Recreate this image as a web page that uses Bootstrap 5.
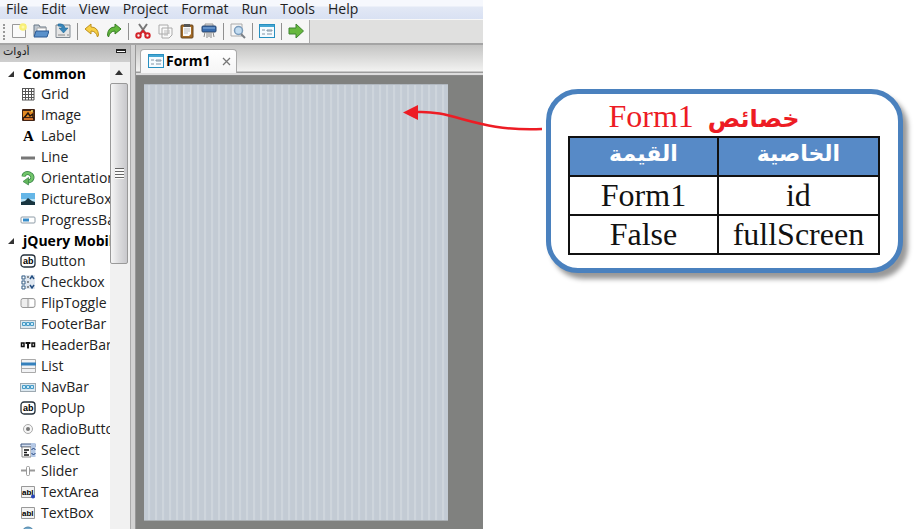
<!DOCTYPE html>
<html lang="en">
<head>
<meta charset="utf-8">
<meta name="viewport" content="width=device-width, initial-scale=1">
<title>Form designer</title>
<link rel="stylesheet" href="https://cdn.jsdelivr.net/npm/bootstrap@5.3.0/dist/css/bootstrap.min.css">
<style>
body{font-family:"Open Sans","Noto Sans",sans-serif;font-size:14px;line-height:20px;color:#222;background:#fff;overflow:hidden}
a{color:inherit;text-decoration:none}
.page{height:100vh;position:relative}
.ide{flex:0 0 52.8%;min-width:0}
.menus{height:20px;gap:13px;padding:0 6px;line-height:18px;background:linear-gradient(#f6f8fd 0 6px,#e2e8f5 7px,#d9e1f3)}
.tools-strip{height:26px;background:#e0e0df;border-top:1px solid #f7f7f7;border-bottom:2px solid #a4a4a4}
.tools-row{background:#f6f6f6;border-right:1px solid #aaa;padding:0 2px 0 8px;position:relative}
.tools-row::before{content:"";position:absolute;left:3px;top:4px;bottom:3px;border-left:2px dotted #999}
.tool{width:22px;height:22px;border:0;background:none;padding:0 3px;display:flex;align-items:center;justify-content:center}
.rule{width:1px;height:17px;background:#909090;margin:0 3px}
.palette{flex:0 0 130px;min-width:0}
.palette-head{height:18px;background:linear-gradient(#b6b6b6,#cfcfcf);padding:0 4px 0 3px;font:11px/14px "DejaVu Sans",sans-serif}
.collapse-btn{width:10px;height:4px;border:1px solid #222;border-width:2px 1px 1px;padding:0;background:#fff;margin-top:4px}
.items{background:#fff;overflow:hidden;min-width:0;padding-top:2px}
.group-title{height:20px;font-weight:700;color:#000;padding-left:7px;white-space:nowrap}
.group-title svg{width:8px;margin-right:8px;flex:none}
.entry{height:21px;padding-left:20px;white-space:nowrap}
.entry svg{width:16px;height:16px;flex:none;margin-right:5px}
.scroller{flex:0 0 20px;background:#f1f1f1}
.scroller button{border:0;background:none;padding:0;height:21px;width:18px;display:flex;align-items:center;justify-content:center}
.thumb{height:181px;width:18px;border:1px solid #999;border-radius:2px;background:linear-gradient(90deg,#f5f5f5,#dcdcde 50%,#c8c8cc)}
.thumb i{width:9px;height:11px;background:repeating-linear-gradient(#666 0 1px,#fafafa 1px 3px)}
.splitter{flex:0 0 6px;background:linear-gradient(90deg,#aaa 0 1px,#d2d2d2 1px 5px,#989898 5px)}
.tab-strip{height:31px;background:linear-gradient(#c4c4c3,#f2f2f1 26px,#9b9b9b 27px 28px,#ddd 28px 30px,#888 30px);padding:4px 4px 3px}
.doc-tab{background:linear-gradient(#fff,#f5f5f5);border:1px solid #aaa;border-bottom:0;border-radius:4px 4px 0 0;height:24px;gap:2px;padding:0 5px 0 7px;font-weight:700;color:#000}
.doc-tab svg{width:16px;height:16px}
.doc-tab button{border:0;background:none;padding:0;display:flex;margin-left:10px}
.doc-tab button svg{width:9px;height:9px}
.stage{background:#80817f;padding:8px 35px 8px 8px}
.form-sheet{background:repeating-linear-gradient(90deg,#c3cbd4 0 4px,#ced5dc 4px 6px,#c4ccd6 6px 7px);border-top:1px solid #b1b8c0;border-bottom:1px solid #a9aeb2}
.side{min-width:0;padding:81px 12px 0 1px}
.edge{width:2px;height:202px;background:linear-gradient(90deg,#777 50%,#c4c4c4 50%)}
.props{margin:8px 0 0 62px;flex:1 1 auto;align-self:flex-start;border:5px solid #4a81be;border-radius:32px;box-shadow:5px 6px 5px #999;padding:4px 18px 13px 17px;background:#fff;font:32px/37px "Liberation Serif",serif;color:#111}
.props caption{caption-side:top;text-align:center;color:#ed1c24;padding:0 40px 0 0;height:38px}
.props .ar{font-family:"DejaVu Sans",sans-serif;font-weight:700;font-size:22px}
.props caption .ar{font-size:24px;line-height:24px;margin-left:6px}
.props table{width:100%;margin:0;border-collapse:collapse;table-layout:fixed;text-align:center}
.props th,.props td{border:2px solid #111;padding:0;height:39px}
.props th{background:#578ac7;color:#fff;line-height:32px;vertical-align:top}
.props th:first-child{width:48%}
.pointer{position:absolute;left:44%;top:100px;width:140px;height:36px}
</style>
<script src="https://cdn.jsdelivr.net/npm/bootstrap@5.3.0/dist/js/bootstrap.bundle.min.js"></script>
</head>
<body>
<svg class="d-none" aria-hidden="true">
<symbol id="form" viewBox="0 0 16 16"><rect x=".5" y="1.5" width="15" height="13" fill="#f5fbff" stroke="#278fc0"/><path d="M1 3h14" stroke="#45a6d2" stroke-width="2"/><path d="M3 7h3M3 11h3M8 7h5v1H8zM8 11h5" stroke="#8295a5" fill="none"/></symbol>
<symbol id="bar" viewBox="0 0 16 16"><rect x=".5" y="4.5" width="15" height="8" fill="#dce8f0" stroke="#9da9b1"/><path d="M2.500 6.500h3v3h-3zM6.500 6.500h3v3h-3zM10.500 6.500h3v3h-3z" fill="#c9e9f8" stroke="#479bc7"/></symbol>
<symbol id="ab" viewBox="0 0 16 16"><rect x="1" y="2" width="14" height="12" rx="3" fill="#fff" stroke="#24303b" stroke-width="1.300"/><text x="3" y="11" font-family="Liberation Sans" font-size="9" font-weight="700">ab</text></symbol>
<symbol id="fold" viewBox="0 0 8 8"><path d="M7 1v6H1z" fill="#333"/></symbol>
</svg>
<div class="page d-flex">
<div class="ide d-flex flex-column">
  <nav class="menus d-flex"><a href="#">File</a><a href="#">Edit</a><a href="#">View</a><a href="#">Project</a><a href="#">Format</a><a href="#">Run</a><a href="#">Tools</a><a href="#">Help</a></nav>
  <div class="tools-strip d-flex">
    <div class="tools-row d-flex align-items-center">
      <button class="tool" aria-label="New"><svg viewBox="0 0 16 16" width="16" height="16"><path d="M2 1.500h12.500v13h-13V1.500z" fill="#fafafa" stroke="#999"/><circle cx="12" cy="4" r="3.800" fill="#f8ef76"/><circle cx="12" cy="4" r="1.500" fill="#fff9a8"/></svg></button>
      <button class="tool" aria-label="Open"><svg viewBox="0 0 16 16" width="16" height="16"><path d="M1 13V2h5l1 2h6v4" fill="#bec7d0" stroke="#697887"/><path d="M4 5h9v5H4z" fill="#fff" stroke="#aaa"/><path d="M3 8h13l-2 6H1z" fill="#5a91cb" stroke="#2c5a94"/></svg></button>
      <button class="tool" aria-label="Save"><svg viewBox="0 0 16 16" width="16" height="16"><path d="M1 2h14v12.500H1z" fill="#e5e5e5" stroke="#808991"/><path d="M3 12h7M12 12h2" stroke="#888"/><path d="M3 1q6-1 7 4h3L8.500 10 4 5h3Q7 3 3 3z" fill="#3785b9" stroke="#19618e" stroke-width=".5"/></svg></button>
      <span class="rule"></span>
      <button class="tool" aria-label="Undo"><svg viewBox="0 0 16 16" width="16" height="16"><path d="M1 6 7 1v3q7 0 7.500 8l-1 2Q12 8 7 8v3z" fill="#f8d044" stroke="#bd901d"/></svg></button>
      <button class="tool" aria-label="Redo"><svg viewBox="0 0 16 16" width="16" height="16"><path d="M15 6 9 1v3Q2 4 1.500 12l1 2Q4 8 9 8v3z" fill="#62b73c" stroke="#387f25"/></svg></button>
      <span class="rule"></span>
      <button class="tool" aria-label="Cut"><svg viewBox="0 0 16 16" width="16" height="16"><path d="M4 1l7 10M12 1 5 11" stroke="#777" stroke-width="2"/><g fill="none" stroke="#d42228" stroke-width="2"><circle cx="3.500" cy="12.500" r="2.200"/><circle cx="12.500" cy="12.500" r="2.200"/><path d="m5 11 3-3 3 3"/></g></svg></button>
      <button class="tool" aria-label="Copy"><svg viewBox="0 0 16 16" width="16" height="16"><path d="M2 2h9v9H2zM5 5h10v7l-3 3H5z" fill="#fafafa" stroke="#aaa"/><path d="M7 8h6M7 10h6M7 12h4" stroke="#bbb"/></svg></button>
      <button class="tool" aria-label="Paste"><svg viewBox="0 0 16 16" width="16" height="16"><rect x="2" y="2" width="12" height="13" rx="1" fill="#a36b26" stroke="#66451d"/><path d="M4 4h8v7l-2 2H4z" fill="#fafafa"/><path d="M5 1h6v3H5z" fill="#555"/><path d="M5 6h6M5 8h6M5 10h4" stroke="#bbb"/></svg></button>
      <button class="tool" aria-label="Shred"><svg viewBox="0 0 16 16" width="16" height="16"><path d="M4 1h8v3H4z" fill="#ddd" stroke="#999"/><rect x="1" y="3" width="14" height="6" rx="1" fill="#386db0" stroke="#28466f"/><path d="M2 5h12" stroke="#8eb6df"/><path d="M4 9l-1 5M6 9v6M8 9v5M10 9v6M12 9l1 5" stroke="#888"/></svg></button>
      <span class="rule"></span>
      <button class="tool" aria-label="Preview"><svg viewBox="0 0 16 16" width="16" height="16"><path d="M1 1h11v12H1z" fill="#f6f6f6" stroke="#aaa"/><circle cx="8.500" cy="7.500" r="4" fill="#c2dcf1" stroke="#7b9cbc" stroke-width="1.500"/><path d="m11 11 4 4" stroke="#7b8086" stroke-width="2"/></svg></button>
      <span class="rule"></span>
      <button class="tool" aria-label="Form"><svg width="16" height="16"><use href="#form"/></svg></button>
      <span class="rule"></span>
      <button class="tool" aria-label="Run"><svg viewBox="0 0 16 16" width="16" height="16"><path d="M1 5h7V1l7.500 7L8 15v-4H1z" fill="#67b83e" stroke="#3e8430"/></svg></button>
    </div>
  </div>
  <div class="d-flex flex-grow-1 overflow-hidden">
    <aside class="palette d-flex flex-column">
      <div class="palette-head d-flex justify-content-between"><span lang="ar" dir="rtl">أدوات</span><button class="collapse-btn" aria-label="Collapse"></button></div>
      <div class="d-flex flex-grow-1 overflow-hidden">
        <div class="items flex-grow-1">
          <div class="group-title d-flex align-items-center"><svg height="8"><use href="#fold"/></svg>Common</div>
          <div class="entry d-flex align-items-center"><svg viewBox="0 0 16 16"><path d="M2.500 2v12M5.500 2v12M8.500 2v12M11.500 2v12M14 2v12M2 2.500h12M2 5.500h12M2 8.500h12M2 11.500h12M2 14h12" stroke="#555"/></svg>Grid</div>
          <div class="entry d-flex align-items-center"><svg viewBox="0 0 16 16"><rect x="2" y="2" width="13" height="12" rx="1" fill="#432313"/><path d="M3 4h8l3 2v4H3z" fill="#e48a23"/><path d="m4 11 4-5 2 3 3-2v5" fill="none" stroke="#221510" stroke-width="1.500"/><path d="M4 12h9" stroke="#d0722a" stroke-width="2"/><circle cx="12" cy="4" r="1" fill="#ffe66c"/></svg>Image</div>
          <div class="entry d-flex align-items-center"><svg viewBox="0 0 16 16"><text x="3" y="13" font-family="Liberation Serif" font-size="15" font-weight="700">A</text></svg>Label</div>
          <div class="entry d-flex align-items-center"><svg viewBox="0 0 16 16"><path d="M1 9h14" stroke="#777" stroke-width="3"/></svg>Line</div>
          <div class="entry d-flex align-items-center"><svg viewBox="0 0 16 16"><path d="M3.500 6.500C4 3 8 2 11 4.500c3 3 1 6.500-3 7" fill="none" stroke="#388348" stroke-width="4"/><path d="M3.500 6.500C4 3 8 2 11 4.500c3 3 1 6.500-3 7" fill="none" stroke="#72c56a" stroke-width="2.500"/><path d="M8.500 7.500v7.500L3 11.500z" fill="#63b65c" stroke="#388348" stroke-width=".7"/></svg>Orientation</div>
          <div class="entry d-flex align-items-center"><svg viewBox="0 0 16 16"><path d="M1 2h14v12H1z" fill="#65b6e7"/><path d="M1 8h14v4H1z" fill="#b9e2f4"/><path d="m1 11 4-1 3-3 4 3 3 1v3H1z" fill="#183540"/></svg>PictureBox</div>
          <div class="entry d-flex align-items-center"><svg viewBox="0 0 16 16"><rect x="1" y="5" width="14" height="6" rx="1" fill="#fff" stroke="#8e9ca7"/><path d="M3 6.500h6v3H3z" fill="#358cca"/></svg>ProgressBar</div>
          <div class="group-title d-flex align-items-center"><svg height="8"><use href="#fold"/></svg>jQuery Mobile</div>
          <div class="entry d-flex align-items-center"><svg><use href="#ab"/></svg>Button</div>
          <div class="entry d-flex align-items-center"><svg viewBox="0 0 16 16"><path d="M1 1h14v14H1z" fill="#e0e8f1"/><path d="M2 2h3v3H2zM2 7h3v3H2zM2 12h3v3H2z" fill="#fff" stroke="#386086"/><path d="M7 3h2M7 8h2M7 13h2" stroke="#333"/><path d="m10 5 2-3 2 3M10 11l2 3 2-3" fill="none" stroke="#244e80" stroke-width="1.500"/></svg>Checkbox</div>
          <div class="entry d-flex align-items-center"><svg viewBox="0 0 16 16"><rect x="1" y="3.500" width="14" height="9" rx="2" fill="#eee" stroke="#999"/><path d="M8 4v8" stroke="#999"/><path d="M10 5h4v6h-4z" fill="#fff"/></svg>FlipToggle</div>
          <div class="entry d-flex align-items-center"><svg><use href="#bar"/></svg>FooterBar</div>
          <div class="entry d-flex align-items-center"><svg viewBox="0 0 16 16"><path d="M1.500 6h2.500v3.500H1.500zM12 6h2.500v3.500H12z" fill="none" stroke="#111" stroke-width="1.500"/><path d="M5.500 6h5M8 5v6.500" stroke="#111" stroke-width="2"/></svg>HeaderBar</div>
          <div class="entry d-flex align-items-center"><svg viewBox="0 0 16 16"><path d="M1.500 1.500h14v13h-14z" fill="#f2f3f5" stroke="#aaa"/><path d="M1 6h15" stroke="#3581bd" stroke-width="3"/><path d="M1 10.500h14" stroke="#aaa"/></svg>List</div>
          <div class="entry d-flex align-items-center"><svg><use href="#bar"/></svg>NavBar</div>
          <div class="entry d-flex align-items-center"><svg><use href="#ab"/></svg>PopUp</div>
          <div class="entry d-flex align-items-center"><svg viewBox="0 0 16 16"><circle cx="8" cy="8" r="4.500" fill="#f6f6f6" stroke="#aaa"/><circle cx="8" cy="8" r="2" fill="#777"/></svg>RadioButton</div>
          <div class="entry d-flex align-items-center"><svg viewBox="0 0 16 16"><path d="M1 2h14v3H1z" fill="#d4e0f2" stroke="#3d5680"/><path d="M2 5h9v10H2z" fill="#fff" stroke="#888"/><path d="M4 8h5M4 10.500h3M4 13h5" stroke="#111" stroke-width="1.500"/><path d="M11 1h4.500v14H11z" fill="#b5c9e6"/><path d="m11.500 8 2-2 2 2m-4 3 2 2 2-2" fill="none" stroke="#1c3e7b"/></svg>Select</div>
          <div class="entry d-flex align-items-center"><svg viewBox="0 0 16 16"><path d="M1 7.500h14" stroke="#999" stroke-width="2"/><rect x="6.500" y="3.500" width="3" height="9" rx="1" fill="#fff" stroke="#999"/></svg>Slider</div>
          <div class="entry d-flex align-items-center"><svg viewBox="0 0 16 16"><path d="M1.500 2.500h13v11h-13z" fill="#f3f3f3" stroke="#999"/><text x="2" y="11" font-family="Liberation Sans" font-size="8" font-weight="700">abl</text><circle cx="13" cy="12.500" r="2" fill="#2946b7"/></svg>TextArea</div>
          <div class="entry d-flex align-items-center"><svg viewBox="0 0 16 16"><path d="M1.500 2.500h13v11h-13z" fill="#f3f3f3" stroke="#999"/><text x="2" y="11" font-family="Liberation Sans" font-size="8" font-weight="700">abl</text></svg>TextBox</div>
          <div class="entry d-flex align-items-center"><svg viewBox="0 0 16 16"><circle cx="8" cy="7" r="6" fill="#73a9cb" stroke="#5084a8"/></svg></div>
        </div>
        <div class="scroller"><button aria-label="Scroll up"><svg width="8" height="5"><path d="M0 5 4 0l4 5z" fill="#333"/></svg></button><div class="thumb d-flex align-items-center justify-content-center"><i></i></div></div>
      </div>
    </aside>
    <div class="splitter"></div>
    <main class="d-flex flex-column flex-grow-1">
      <div class="tab-strip d-flex"><div class="doc-tab d-flex align-items-center"><svg><use href="#form"/></svg>Form1<button aria-label="Close tab"><svg viewBox="0 0 9 9"><path d="m1 1 7 7M8 1 1 8" stroke="#777" stroke-width="1.300"/></svg></button></div></div>
      <div class="stage flex-grow-1 d-flex"><div class="form-sheet flex-grow-1"></div></div>
    </main>
  </div>
</div>
<div class="side d-flex flex-grow-1 align-items-start">
  <div class="edge"></div>
  <section class="props">
    <table>
      <caption dir="ltr">Form1 <span class="ar" lang="ar">خصائص</span></caption>
      <thead><tr><th class="ar" lang="ar" scope="col">القيمة</th><th class="ar" lang="ar" scope="col">الخاصية</th></tr></thead>
      <tbody><tr><td>Form1</td><td>id</td></tr><tr><td>False</td><td>fullScreen</td></tr></tbody>
    </table>
  </section>
</div>
<svg class="pointer" viewBox="0 0 140 36" aria-hidden="true"><path d="M14 12C51 10 74 32 139 29" fill="none" stroke="#ed1c24" stroke-width="2.500"/><path d="M0 12.500 15 5v15z" fill="#ed1c24"/></svg>
</div>
</body>
</html>
